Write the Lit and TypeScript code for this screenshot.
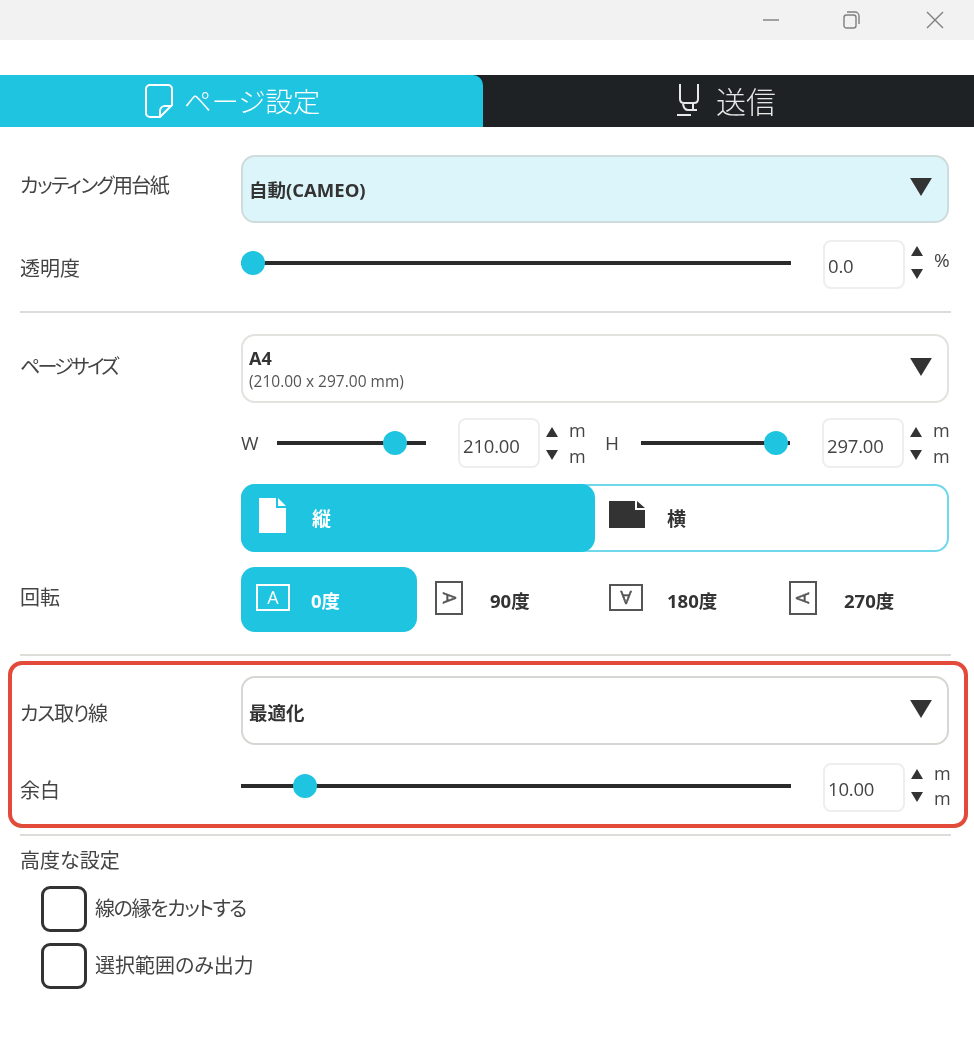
import { LitElement, html, css, svg } from "lit";
import { customElement } from "lit/decorators.js";

const arrow = (up: boolean) =>
  html`<svg class="tri" viewBox="0 0 12 12"><polygon points=${up ? "6,1 12,11 0,11" : "0,1 12,1 6,11"}></polygon></svg>`;
const drop = html`<svg viewBox="0 0 23 19"><polygon points="0,0 23,0 11.5,19"></polygon></svg>`;

@customElement("app-root")
export class AppRoot extends LitElement {
  static styles = css`
    :host {
      display: block;
      width: 974px;
      height: 1054px;
      background: #fff;
      overflow: hidden;
      color: #444;
      font-family: "Open Sans", "Noto Sans CJK JP", sans-serif;
      font-size: 20px;
      font-feature-settings: "palt";
      filter: blur(0.55px);
    }
    .title { height: 40px; background: #f2f2f2; display: flex; justify-content: flex-end; align-items: flex-start; }
    .title svg { display: block; fill: none; stroke: #808080; stroke-width: 1.4; }
    .win-min { margin: 19px 0 0; }
    .win-max { margin: 11px 0 0 64px; }
    .win-close { margin: 11px 30px 0 66px; }
    .tabs { margin-top: 35px; height: 52px; background: #1e2224; display: flex; color: #fff; font-size: 27.5px; line-height: 52px; }
    .tab { display: flex; align-items: center; justify-content: center; }
    .tab.on { width: 483px; background: #1fc4e0; border-top-right-radius: 10px; padding-right: 18px; box-sizing: border-box; gap: 11px; }
    .tab.off { flex: 1; color: #e8e8e8; gap: 16px; font-size: 30px; padding-right: 5px; }
    .tab span { font-weight: 300; position: relative; top: 1px; }
    .tab svg { fill: none; stroke: currentColor; stroke-width: 2; display: block; }
    main { padding: 28px 23px 0 20px; }
    .row { display: grid; grid-template-columns: 221px 1fr; }
    .gap15 { margin-top: 15px; }
    .gap16 { margin-top: 16px; }
    .gap17 { margin-top: 17px; }
    .gap18 { margin-top: 18px; }
    .gap21 { margin-top: 21px; }
    .label { line-height: 28px; white-space: nowrap; }
    .p14 { padding-top: 14px; }
    .p15 { padding-top: 15px; }
    .p17 { padding-top: 17px; }
    .p19 { padding-top: 19px; }
    .p24 { padding-top: 24px; }
    .tight1 { letter-spacing: -1.6px; }
    .tight2 { letter-spacing: -2.8px; }
    .tight3 { letter-spacing: -1.3px; }
    .tight4 { letter-spacing: -1.4px; }
    .select {
      height: 68px; box-sizing: border-box; border: 2px solid #e2e2de; border-radius: 14px;
      display: flex; align-items: center; justify-content: space-between;
      padding: 0 15px 0 6px; font-weight: 700; font-size: 18.5px; color: #333; width: 708px;
    }
    .select.tint { background: #dcf5fa; border-color: #cfdcdc; }
    .select.size { height: 69px; }
    .select.plain { border-color: #d6d6d2; height: 69px; }
    .select.plain span { margin-top: 2px; }
    .select svg { width: 22px; height: 18px; fill: #333; margin-top: -4px; display: block; }
    .select .two { font-size: 18px; line-height: 22px; margin-top: 2px; }
    .select .two small { display: block; font-weight: 400; font-size: 15.5px; line-height: 24px; color: #555; }
    .sl { position: relative; height: 4px; background: #2b2b2b; }
    .sl i { position: absolute; top: 50%; width: 24px; height: 24px; margin: -12px 0 0 -12px; border-radius: 50%; background: #1fc4e0; }
    .ctrl { display: flex; align-items: center; height: 49px; }
    .ctrl.tall { height: 50px; }
    .ctrl .sl { width: 550px; margin-top: -3px; }
    .ctrl .sl.short { width: 149px; margin-top: 0; }
    .input {
      width: 82px; height: 49px; box-sizing: border-box; border: 2px solid #eee; border-radius: 8px;
      font-size: 18.5px; line-height: 47px; padding-left: 3px; color: #444; margin-left: 32px; letter-spacing: -0.2px;
    }
    .tall .input { height: 50px; line-height: 51px; }
    .spin { display: flex; flex-direction: column; gap: 11px; margin: -4px 0 0 6px; width: 12px; }
    .tall .spin { margin-top: 0; }
    .tri { display: block; width: 12px; height: 12px; fill: #333; }
    .unit { margin: -4px 0 0 11px; font-size: 18px; width: 16px; line-height: 25px; color: #444; }
    .tall .unit { margin-top: 0; line-height: 26px; }
    .unit.pct { margin-top: -9px; font-size: 19px; }
    .wh { font-size: 19px; color: #444; width: 36px; }
    .hh { margin-left: 20px; width: 36px; font-size: 19px; color: #444; }
    hr { margin: 0; border: 0; height: 2px; background: #dddcd8; }
    .hr22 { margin-top: 22px; }
    .seg { width: 708px; height: 68px; box-sizing: border-box; border: 2px solid #6fd8ea; border-radius: 14px; display: flex; font-weight: 700; font-size: 19px; }
    .seg > div { display: flex; align-items: center; }
    .seg .on { width: 354px; margin: -2px 0 -2px -2px; background: #1fc4e0; border-radius: 14px; color: #fff; padding-left: 18px; box-sizing: border-box; }
    .seg .off { padding-left: 14px; color: #333; }
    .seg svg { display: block; }
    .seg .on svg { margin-top: -6px; }
    .seg .off svg { margin-top: -8px; }
    .seg .t1 { margin-left: 26px; }
    .seg .t2 { margin-left: 22px; }
    .rot { display: grid; grid-template-columns: 176px 177px 177px 176px; font-weight: 700; font-size: 18.5px; color: #333; height: 65px; }
    .rot > div { display: flex; align-items: center; padding-left: 14px; border-radius: 14px; }
    .rot .on { background: #1fc4e0; color: #fff; }
    .ico { width: 36px; display: flex; justify-content: center; margin-right: 23px; margin-top: -4px; }
    .rot .on .ico { margin-right: 20px; }
    .ico svg { display: block; fill: none; stroke: #555; stroke-width: 2; }
    .rot .on svg { stroke: #fff; }
    .ico text { font-family: "Open Sans", sans-serif; font-size: 18px; font-weight: 400; text-anchor: middle; fill: #555; stroke: #555; stroke-width: 0.5; }
    .rot .on text { fill: #fff; stroke: #fff; stroke-width: 0; }
    .red {
      margin: 5px -17px 6px -12px; padding: 11px 13px 12px 8px; border: 4px solid #e24a3a; border-radius: 14px;
    }
    .adv { margin-top: 11px; line-height: 28px; }
    .chk { display: flex; align-items: center; margin-left: 21px; height: 46px; gap: 8px; }
    .chk b { width: 46px; height: 46px; box-sizing: border-box; border: 3px solid #333; border-radius: 9px; display: block; }
    .chk span { margin-top: -4px; }
    .chk.first { margin-top: 11px; }
    .chk.second { margin-top: 11px; }
  `;

  spinner(unit: boolean) {
    return html`<div class="spin">${arrow(true)}${arrow(false)}</div>
      ${unit ? html`<div class="unit">m<br />m</div>` : html`<div class="unit pct">%</div>`}`;
  }

  render() {
    return html`
      <div class="title">
        <svg class="win-min" width="16" height="2" viewBox="0 0 16 2"><path d="M0 1h16"></path></svg>
        <svg class="win-max" width="17" height="18" viewBox="0 0 17 18"><rect x="1" y="4" width="12" height="13" rx="2.5"></rect><path d="M4 1h8a4 4 0 0 1 4 4v8"></path></svg>
        <svg class="win-close" width="18" height="18" viewBox="0 0 18 18"><path d="M1 1l16 16M17 1L1 17"></path></svg>
      </div>
      <div class="tabs">
        <div class="tab on">
          <svg width="28" height="34" viewBox="0 0 28 34"><path d="M5 1h18a4 4 0 0 1 4 4v16L15 33H5a4 4 0 0 1-4-4V5a4 4 0 0 1 4-4z"></path><path d="M15 33v-6a5 5 0 0 1 5-5h7"></path></svg>
          <span>ページ設定</span>
        </div>
        <div class="tab off">
          <svg width="24" height="34" viewBox="0 0 24 34"><path d="M4 0v15q0 4 4 4h10q4 0 4-4V0"></path><path d="M7 20q1 6 5 6h9M17 20v6"></path><path d="M1 31h14"></path></svg>
          <span>送信</span>
        </div>
      </div>
      <main>
        <div class="row">
          <div class="label p17 tight1">カッティング用台紙</div>
          <div class="select tint"><span>自動(CAMEO)</span>${drop}</div>
        </div>
        <div class="row gap17">
          <div class="label p15">透明度</div>
          <div class="ctrl">
            <div class="sl"><i style="left:12px"></i></div>
            <div class="input">0.0</div>
            ${this.spinner(false)}
          </div>
        </div>
        <hr class="hr22" />
        <div class="row gap21">
          <div class="label p19 tight2">ページサイズ</div>
          <div class="select size"><div class="two">A4<small>(210.00 x 297.00 mm)</small></div>${drop}</div>
        </div>
        <div class="row gap15">
          <div></div>
          <div class="ctrl tall">
            <div class="wh">W</div>
            <div class="sl short"><i style="left:118px"></i></div>
            <div class="input">210.00</div>
            ${this.spinner(true)}
            <div class="hh">H</div>
            <div class="sl short"><i style="left:135px"></i></div>
            <div class="input">297.00</div>
            ${this.spinner(true)}
          </div>
        </div>
        <div class="row gap16">
          <div></div>
          <div class="seg">
            <div class="on">
              <svg width="27" height="35" viewBox="0 0 27 35"><path fill="#fff" d="M0 0h17v10h10v25H0z"></path><path fill="#fff" d="M19 0l8 8h-8z"></path></svg>
              <span class="t1">縦</span>
            </div>
            <div class="off">
              <svg width="36" height="27" viewBox="0 0 36 27"><path fill="#333" d="M0 0h26v9h10v18H0z"></path><path fill="#333" d="M28 0l8 7h-8z"></path></svg>
              <span class="t2">横</span>
            </div>
          </div>
        </div>
        <div class="row gap15">
          <div class="label p17">回転</div>
          <div class="rot">
            <div class="on"><span class="ico"><svg width="34" height="27" viewBox="0 0 34 27"><rect x="1" y="1" width="32" height="25"></rect>${svg`<text x="17" y="20">A</text>`}</svg></span><span>0度</span></div>
            <div><span class="ico"><svg width="28" height="34" viewBox="0 0 28 34"><rect x="1" y="1" width="26" height="32"></rect>${svg`<text transform="translate(8 17) rotate(90)">A</text>`}</svg></span><span>90度</span></div>
            <div><span class="ico"><svg width="34" height="27" viewBox="0 0 34 27"><rect x="1" y="1" width="32" height="25"></rect>${svg`<text transform="translate(17 7) rotate(180)">A</text>`}</svg></span><span>180度</span></div>
            <div><span class="ico"><svg width="28" height="34" viewBox="0 0 28 34"><rect x="1" y="1" width="26" height="32"></rect>${svg`<text transform="translate(20 17) rotate(-90)">A</text>`}</svg></span><span>270度</span></div>
          </div>
        </div>
        <hr class="hr22" />
        <div class="red">
          <div class="row">
            <div class="label p24 tight3">カス取り線</div>
            <div class="select plain"><span>最適化</span>${drop}</div>
          </div>
          <div class="row gap18">
            <div class="label p14">余白</div>
            <div class="ctrl">
              <div class="sl"><i style="left:64px"></i></div>
              <div class="input">10.00</div>
              ${this.spinner(true)}
            </div>
          </div>
        </div>
        <hr />
        <div class="adv">高度な設定</div>
        <div class="chk first"><b></b><span class="tight4">線の縁をカットする</span></div>
        <div class="chk second"><b></b><span>選択範囲のみ出力</span></div>
      </main>
    `;
  }
}
